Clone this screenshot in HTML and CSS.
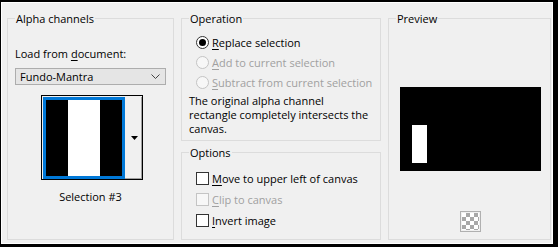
FILE: index.html
```html
<!DOCTYPE html>
<html lang="en">
<head>
	<meta charset="UTF-8">
	<title>Load Selection From Alpha Channel</title>
	<link rel="stylesheet" href="styles.css">
</head>
<body>
	<div class="win">
		<!-- alpha channels -->
		<fieldset class="grp alpha">
			<legend>Alpha channels</legend>
			<div class="lbl">Load from <u>d</u>ocument:</div>
			<div class="combo">
				<span>Fundo-Mantra</span>
				<svg width="9" height="5" viewBox="0 0 9 5"><path d="M0.5 0.5 L4.5 4.5 L8.5 0.5" fill="none" stroke="#444" stroke-width="1"/></svg>
			</div>
			<div class="thumb">
				<div class="sel"><i class="blk"></i><i class="wht"></i><i class="blk"></i></div>
				<div class="drop">
					<svg width="7" height="4" viewBox="0 0 7 4"><path d="M0 0 H7 L3.5 4 Z" fill="#000"/></svg>
				</div>
			</div>
			<div class="cap">Selection #3</div>
		</fieldset>

		<div class="mid">
			<!-- operation -->
			<fieldset class="grp oper">
				<legend>Operation</legend>
				<div class="rows first">
					<label class="row"><span class="radio on"></span><span><u>R</u>eplace selection</span></label>
					<label class="row off"><span class="radio"></span><span><u>A</u>dd to current selection</span></label>
					<label class="row off"><span class="radio"></span><span><u>S</u>ubtract from current selection</span></label>
				</div>
				<p class="note">The original alpha channel<br>rectangle completely intersects the<br>canvas.</p>
			</fieldset>

			<!-- options -->
			<fieldset class="grp opts">
				<legend>Options</legend>
				<div class="rows">
					<label class="row chk"><span class="box"></span><span><u>M</u>ove to upper left of canvas</span></label>
					<label class="row chk off"><span class="box"></span><span><u>C</u>lip to canvas</span></label>
					<label class="row chk"><span class="box"></span><span><u>I</u>nvert image</span></label>
				</div>
			</fieldset>
		</div>

		<!-- preview -->
		<fieldset class="grp prev">
			<legend>Preview</legend>
			<div class="canvas"><div class="bar"></div></div>
			<div class="checker"><i></i></div>
		</fieldset>
	</div>
</body>
</html>
```

FILE: styles.css
```css
html,body{
	margin: 0;
	padding: 0;
}
body{
	background: #000;
	font-family: "Open Sans", "Noto Sans", sans-serif;
	font-size: 11px;
	color: #000;
}
u{
	text-underline-offset: 2px;
}

/* window */
.win{
	box-sizing: border-box;
	width: 552px;
	height: 242px;
	margin: 2px 0 0 1px;
	padding: 8px 0 0 5px;
	border: 1px solid #fff;
	background: #f0f0f0;
	display: flex;
	gap: 7px;
}

/* group boxes */
.grp{
	box-sizing: border-box;
	margin: 0;
	padding: 0 7px;
	min-width: 0;
	border: 1px solid #dcdcdc;
}
.grp legend{
	padding: 0 1px;
	line-height: 15px;
}
.alpha{
	width: 167px;
	height: 229px;
}
.mid{
	width: 200px;
	display: flex;
	flex-direction: column;
	gap: 4px;
}
.oper{
	height: 130px;
}
.opts{
	height: 95px;
}
.prev{
	width: 163px;
	height: 229px;
}

/* alpha channels */
.lbl{
	margin-top: 20px;
	line-height: 15px;
}
.combo{
	box-sizing: border-box;
	height: 17px;
	margin-top: 7px;
	padding: 0 5px 0 4px;
	border: 1px solid #adadad;
	background: #e5e5e5;
	display: flex;
	align-items: center;
	justify-content: space-between;
}
.thumb{
	width: 99px;
	margin: 10px 0 0 26px;
	padding: 1px 0 0 1px;
	border: 1px solid #000;
	display: flex;
}
.sel{
	width: 76px;
	height: 76px;
	border: 3px solid #0078d7;
	display: flex;
}
.sel i{
	display: block;
}
.sel .blk{
	width: 22px;
	background: #000;
}
.sel .wht{
	width: 32px;
	background: #fff;
}
.drop{
	flex: 1;
	display: flex;
	align-items: center;
	justify-content: center;
	padding-left: 2px;
	box-shadow: inset -1px -1px 0 #a0a0a0;
}
.cap{
	margin-top: 9px;
	line-height: 15px;
	text-align: center;
}

/* radio / check rows */
.rows.first{
	margin-top: 6px;
}
.opts .rows{
	margin-top: 8px;
}
.row{
	height: 20px;
	display: flex;
	align-items: center;
}
.row.chk{
	height: 21px;
}
.row.off{
	color: #a0a0a0;
}
.radio,
.box{
	box-sizing: border-box;
	width: 13px;
	height: 13px;
	margin: 0 3px 0 7px;
	border: 1px solid #333;
	background: #fff;
	flex: none;
}
.radio{
	border-radius: 50%;
	display: flex;
	align-items: center;
	justify-content: center;
}
.radio.on::after{
	content: "";
	width: 7px;
	height: 7px;
	border-radius: 50%;
	background: #000;
}
.off .radio,
.off .box{
	border-color: #c4c4c4;
	background: #f7f7f7;
}
.note{
	margin: 2px 0 0;
	line-height: 14px;
}

/* preview */
.canvas{
	width: 141px;
	height: 84px;
	margin: 61px 0 0 4px;
	background: #000;
	display: flex;
	align-items: flex-start;
}
.bar{
	width: 15px;
	height: 38px;
	margin: 38px 0 0 12px;
	background: #fff;
}
.checker{
	box-sizing: border-box;
	width: 21px;
	height: 21px;
	margin: 40px 0 0 64px;
	padding: 1px;
	border: 1px solid #b0b0b0;
	background: #f0f0f0;
}
.checker i{
	display: block;
	width: 17px;
	height: 17px;
	background: repeating-conic-gradient(#a8a8a8 0 25%, #fff 0 50%) 0 0 / 8px 8px;
}
```
